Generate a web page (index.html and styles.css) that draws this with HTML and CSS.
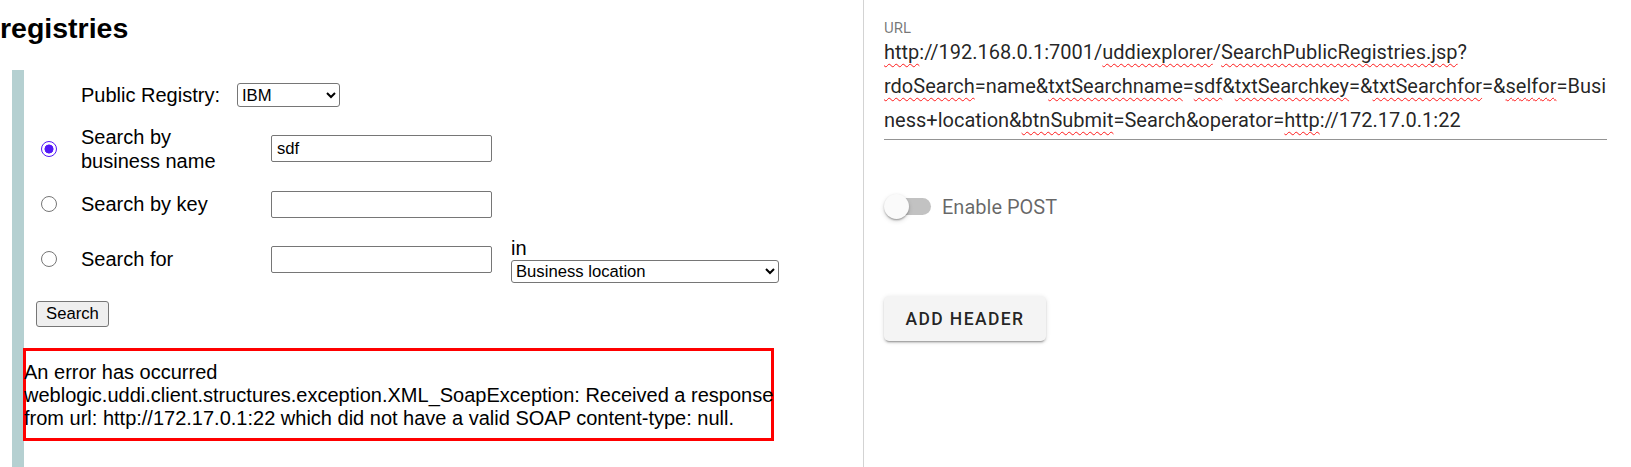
FILE: index.html
```html
<!DOCTYPE html>
<html>
<head>
<meta charset="utf-8">
<link rel="stylesheet" href="styles.css">
</head>
<body>
<div class="page">
  <div class="left">
    <h1 class="title">registries</h1>
    <div class="form">
      <div class="grid">
        <div class="cell"></div>
        <div class="cell span2 registry">
          <span class="label">Public Registry:</span>
          <select class="sel sel-ibm"><option>IBM</option></select>
        </div>
        <div class="cell"></div>

        <div class="cell radio-cell"><span class="radio checked"></span></div>
        <div class="cell label">Search by<br>business name</div>
        <div class="cell"><input class="txt" type="text" value="sdf"></div>
        <div class="cell"></div>

        <div class="cell radio-cell"><span class="radio"></span></div>
        <div class="cell label">Search by key</div>
        <div class="cell"><input class="txt" type="text" value=""></div>
        <div class="cell"></div>

        <div class="cell radio-cell"><span class="radio"></span></div>
        <div class="cell label">Search for</div>
        <div class="cell"><input class="txt" type="text" value=""></div>
        <div class="cell in-cell">
          <div class="label">in</div>
          <select class="sel sel-loc"><option>Business location</option></select>
        </div>
      </div>
      <button class="btn-search">Search</button>
      <div class="error"><div class="err-text">An error has occurred<br>weblogic.uddi.client.structures.exception.XML_SoapException: Received a response<br>from url: http://172.17.0.1:22 which did not have a valid SOAP content-type: null.</div></div>
    </div>
  </div>
  <div class="right">
    <div class="url-label">URL</div>
    <div class="url-field">
      <div class="url-line"><span class="sp">http</span>://192.168.0.1:7001/<span class="sp">uddiexplorer</span>/<span class="sp">SearchPublicRegistries.jsp</span>?</div>
      <div class="url-line"><span class="sp">rdoSearch</span>=name&amp;<span class="sp">txtSearchname</span>=<span class="sp">sdf</span>&amp;<span class="sp">txtSearchkey</span>=&amp;<span class="sp">txtSearchfor</span>=&amp;<span class="sp">selfor</span>=Busi</div>
      <div class="url-line">ness+location&amp;<span class="sp">btnSubmit</span>=Search&amp;operator=<span class="sp">http</span>://172.17.0.1:22</div>
    </div>
    <div class="switch-row">
      <span class="switch">
        <span class="track"></span>
        <span class="thumb"></span>
      </span>
      <span class="switch-label">Enable POST</span>
    </div>
    <button class="add-header">ADD HEADER</button>
  </div>
</div>
</body>
</html>
```
FILE: styles.css
```css
html, body {
  margin: 0;
  padding: 0;
  background: #fff;
  height: 100%;
  overflow: hidden;
}
.page {
  display: flex;
  height: 467px;
}
.left {
  width: 863px;
  flex: none;
  display: flex;
  flex-direction: column;
  font-family: "Liberation Sans", Arial, sans-serif;
  color: #000;
}
.title {
  margin: 12px 0 0 0;
  font-size: 28.5px;
  line-height: 32px;
  font-weight: bold;
}
.form {
  margin: 26px 0 0 12px;
  border-left: 12px solid #b5d0d1;
  flex: 1;
}
.grid {
  display: grid;
  grid-template-columns: 57px 190px 221px auto;
  grid-template-rows: 50px 57px 54px 56px;
  align-items: center;
}
.span2 {
  grid-column: span 2;
}
.registry {
  display: flex;
  align-items: center;
  gap: 17px;
}
.label {
  font-size: 20px;
  line-height: 24px;
}
.radio-cell {
  display: flex;
  padding-left: 17px;
}
.radio {
  width: 16px;
  height: 16px;
  box-sizing: border-box;
  border-radius: 50%;
  border: 1px solid #767676;
  background: #fff;
}
.radio.checked {
  border: 1.5px solid #5218f7;
  background: radial-gradient(circle, #5218f7 0 4.2px, #fff 4.8px);
}
.txt {
  display: block;
  box-sizing: border-box;
  width: 221px;
  height: 27px;
  margin: 0;
  padding: 1px 5px;
  border: 1px solid #767676;
  border-radius: 2px;
  font-family: "Liberation Sans", Arial, sans-serif;
  font-size: 16.67px;
  color: #000;
}
.sel {
  box-sizing: border-box;
  margin: 0;
  border: 1px solid #767676;
  border-radius: 3px;
  font-family: "Liberation Sans", Arial, sans-serif;
  font-size: 16.67px;
  color: #000;
  background: #fff;
}
.sel-ibm {
  width: 103px;
  height: 24px;
}
.in-cell {
  padding-left: 19px;
}
.sel-loc {
  display: block;
  width: 268px;
  height: 23px;
}
.btn-search {
  display: block;
  margin: 14px 0 0 12px;
  width: 73px;
  height: 26px;
  padding: 0;
  font-family: "Liberation Sans", Arial, sans-serif;
  font-size: 16.67px;
  color: #000;
  background: #efefef;
  border: 1px solid #767676;
  border-radius: 3px;
}
.error {
  margin: 21px 0 0 -1px;
  width: 751px;
  height: 93px;
  box-sizing: border-box;
  border: 3px solid #ff0000;
  padding: 10px 0 0 0;
}
.err-text {
  margin-left: -2px;
  font-size: 20px;
  line-height: 23px;
  white-space: nowrap;
}
.right {
  flex: 1;
  border-left: 1px solid #d3d3d3;
  padding: 22px 24px 0 20px;
  font-family: Roboto, "Noto Sans", sans-serif;
  display: flex;
  flex-direction: column;
  align-items: flex-start;
}
.url-label {
  font-size: 15px;
  line-height: 13px;
  color: rgba(0, 0, 0, 0.54);
}
.url-field {
  align-self: stretch;
  padding-bottom: 2px;
  border-bottom: 1px solid #949494;
  font-size: 20px;
  line-height: 34px;
  color: rgba(0, 0, 0, 0.87);
}
.url-line {
  white-space: nowrap;
}
.sp {
  text-decoration: underline wavy #ff1a1a;
  text-decoration-thickness: 1px;
  text-underline-offset: 4px;
}
.switch-row {
  display: flex;
  align-items: center;
  margin: 43px 0 0 -11px;
}
.switch {
  position: relative;
  display: block;
  width: 69px;
  height: 48px;
}
.track {
  position: absolute;
  left: 15px;
  top: 15px;
  width: 43px;
  height: 17px;
  border-radius: 9px;
  background: #c2c2c2;
}
.thumb {
  position: absolute;
  left: 11px;
  top: 11px;
  width: 25px;
  height: 25px;
  border-radius: 50%;
  background: #fafafa;
  box-shadow: 0 2px 2px -1px rgba(0,0,0,0.22), 0 1px 2px 0 rgba(0,0,0,0.16), 0 2px 5px 0 rgba(0,0,0,0.14);
}
.switch-label {
  font-size: 20px;
  color: rgba(0, 0, 0, 0.6);
}
.add-header {
  margin-top: 65px;
  width: 162px;
  height: 45px;
  padding: 0;
  border: none;
  border-radius: 5px;
  background: #f4f4f4;
  box-shadow: 0 3px 1px -2px rgba(0,0,0,0.2), 0 2px 2px 0 rgba(0,0,0,0.14), 0 1px 5px 0 rgba(0,0,0,0.12);
  font-family: Roboto, "Noto Sans", sans-serif;
  font-weight: 500;
  font-size: 17.5px;
  letter-spacing: 1.4px;
  color: rgba(0, 0, 0, 0.87);
}
```
